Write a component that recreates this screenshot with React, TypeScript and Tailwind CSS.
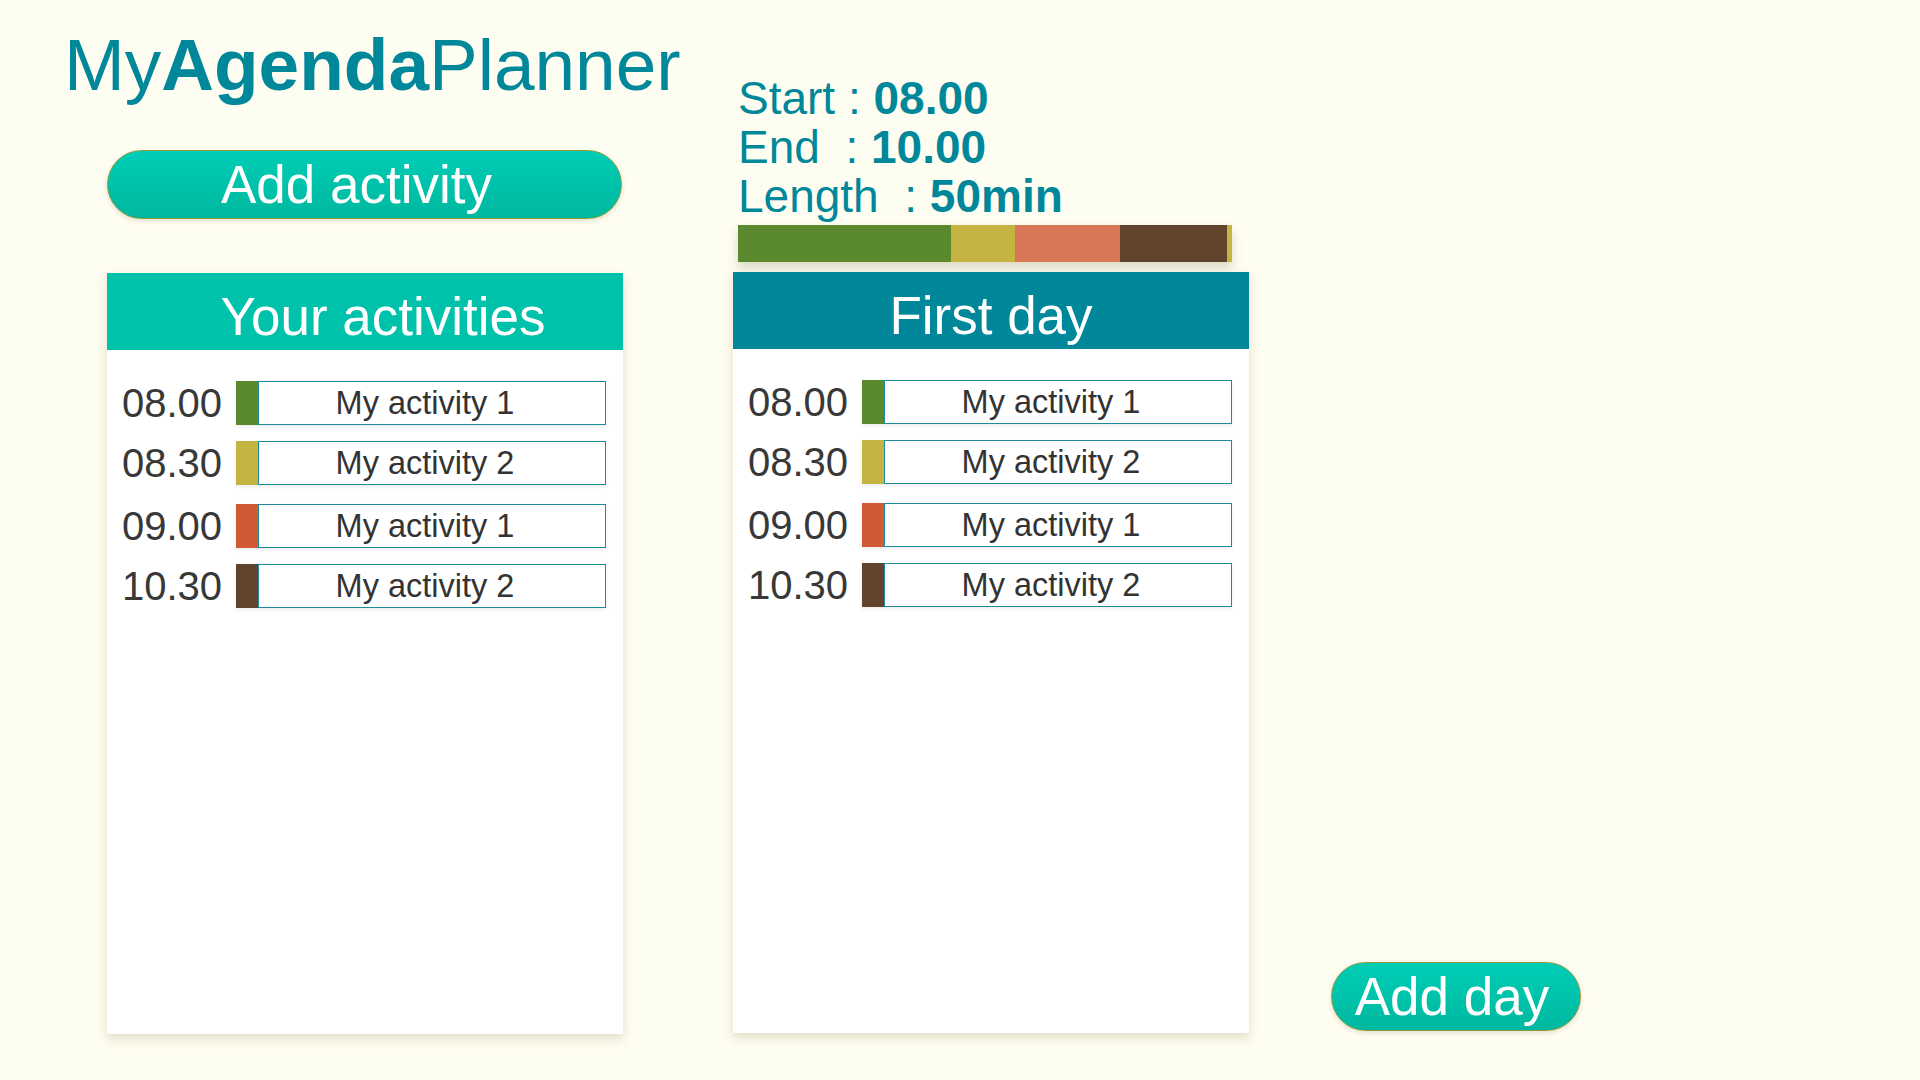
import React from "react";

type Row = { time: string; label: string; color: string };

const ROWS: Row[] = [
  { time: "08.00", label: "My activity 1", color: "bg-[#5b8a2e]" },
  { time: "08.30", label: "My activity 2", color: "bg-[#c5b441]" },
  { time: "09.00", label: "My activity 1", color: "bg-[#d05a33]" },
  { time: "10.30", label: "My activity 2", color: "bg-[#62432e]" },
];

const ROW_GAPS = ["mt-[31px]", "mt-[16px]", "mt-[19px]", "mt-[16px]"];

function Panel({ title, headerClass }: { title: string; headerClass: string }) {
  return (
    <section className="flex h-[761px] w-[516px] flex-col bg-white shadow-[0_5px_10px_rgba(140,130,80,0.25)]">
      <div
        className={`h-[77px] pt-[10px] text-center text-[53px] leading-[67px] text-white ${headerClass}`}
      >
        {title}
      </div>
      <ul className="flex flex-col">
        {ROWS.map((row, i) => (
          <li key={i} className={`flex items-center ${ROW_GAPS[i]}`}>
            <span className="ml-[15px] w-[99px] text-[40px] leading-[44px] text-[#383838]">
              {row.time}
            </span>
            <div className="ml-[15px] flex h-[44px] w-[370px] shadow-[0_2px_4px_rgba(0,0,0,0.08)]">
              <div className={`w-[22px] ${row.color}`} />
              <div className="flex flex-1 items-center justify-center border border-[#1a8c9c] pr-[14px] text-[32.5px] text-[#333]">
                {row.label}
              </div>
            </div>
          </li>
        ))}
      </ul>
    </section>
  );
}

function PillButton({ label, className }: { label: string; className: string }) {
  return (
    <button
      type="button"
      className={`flex h-[69px] items-center justify-center rounded-full border border-[#8e9a3c] bg-gradient-to-b from-[#00cdb6] to-[#00b89f] text-[53px] text-white shadow-[0_2px_5px_rgba(120,110,60,0.2)] ${className}`}
    >
      {label}
    </button>
  );
}

export default function App() {
  return (
    <div className="min-h-screen w-full bg-[#fefdf1] font-['Liberation_Sans',Arial,sans-serif]">
      <div className="flex items-start">
        {/* left column */}
        <div className="ml-[64px] flex w-[558px] flex-col">
          <h1 className="pt-[25px] text-[73px] leading-[80px] text-[#00879a]">
            My<span className="font-bold">Agenda</span>Planner
          </h1>
          <PillButton label="Add activity" className="ml-[43px] mt-[45px] w-[515px] pr-[16px]" />
          <div className="ml-[43px] mt-[54px]">
            <Panel title="Your activities" headerClass="bg-[#00c1aa] pl-[36px]" />
          </div>
        </div>

        {/* day column */}
        <div className="ml-[111px] flex w-[516px] flex-col">
          <div className="whitespace-pre pl-[5px] pt-[74px] text-[46px] leading-[49px] text-[#00879a]">
            <div>
              Start : <span className="font-bold">08.00</span>
            </div>
            <div>
              End  : <span className="font-bold">10.00</span>
            </div>
            <div>
              Length  : <span className="font-bold">50min</span>
            </div>
          </div>
          <div className="ml-[5px] mt-[4px] flex h-[37px] w-[494px] shadow-[0_6px_10px_rgba(120,110,60,0.25)]">
            <div className="w-[213px] bg-[#5b8a2e]" />
            <div className="w-[64px] bg-[#c5b441]" />
            <div className="w-[105px] bg-[#d77758]" />
            <div className="w-[107px] bg-[#62432e]" />
            <div className="w-[5px] bg-[#c5b441]" />
          </div>
          <div className="mt-[10px]">
            <Panel title="First day" headerClass="bg-[#00879a]" />
          </div>
        </div>

        {/* right */}
        <div className="ml-[82px] self-end pb-[3px]">
          <PillButton label="Add day" className="w-[250px] pr-[8px]" />
        </div>
      </div>
    </div>
  );
}
